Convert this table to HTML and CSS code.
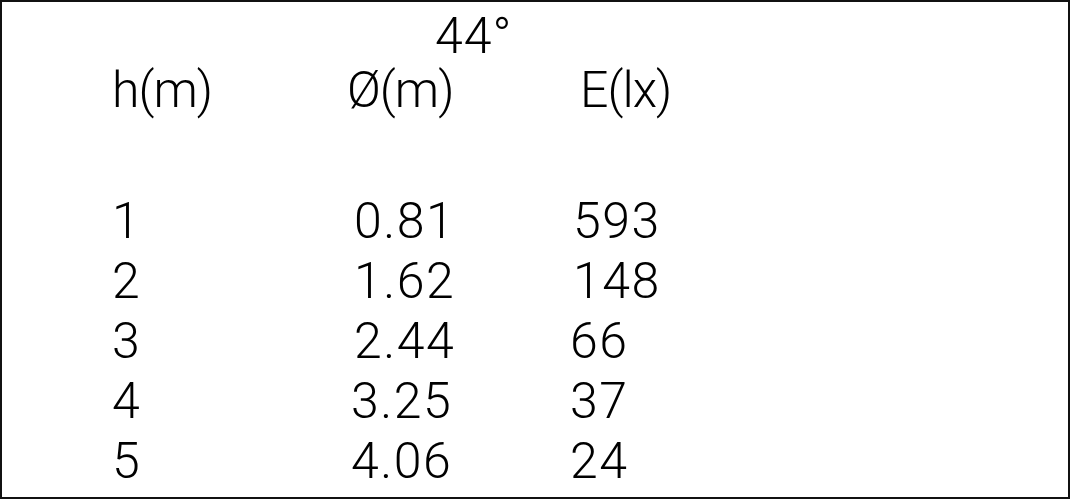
FILE: index.html
```
<!DOCTYPE html>
<html lang="en">
<head>
  <meta charset="UTF-8">
  <title>Beam table 44°</title>
  <link rel="stylesheet" href="styles.css">
</head>
<body>
  <div class="beam-card">
    <div class="beam-angle">44°</div>
    <div class="beam-row beam-head">
      <span>h(m)</span>
      <span>Ø(m)</span>
      <span>E(lx)</span>
    </div>
    <div class="beam-body">
      <div class="beam-row"><span>1</span><span>0.81</span><span>593</span></div>
      <div class="beam-row"><span>2</span><span>1.62</span><span>148</span></div>
      <div class="beam-row"><span>3</span><span>2.44</span><span class="nudge">66</span></div>
      <div class="beam-row"><span>4</span><span class="nudge">3.25</span><span class="nudge">37</span></div>
      <div class="beam-row"><span>5</span><span class="nudge">4.06</span><span class="nudge">24</span></div>
    </div>
  </div>
</body>
</html>
```

FILE: styles.css
```
* { box-sizing: border-box; }

body {
  margin: 0;
  background: #fff;
  font-family: Roboto, 'Liberation Sans', sans-serif;
  font-weight: 300;
  color: #000;
}

.beam-card {
  width: 1070px;
  height: 499px;
  border: 2px solid #111;
  padding: 7px 0 0 110px;
  font-size: 50px;
  overflow: hidden;
}

.beam-angle {
  line-height: 54px;
  padding-left: 323px;
  letter-spacing: 1px;
}

.beam-row {
  display: grid;
  grid-template-columns: 242px 219px auto;
  line-height: 60px;
  white-space: nowrap;
  letter-spacing: 1.5px;
}

.beam-head {
  grid-template-columns: 235px 233px auto;
  line-height: 54px;
  letter-spacing: -1px;
}

.beam-body { margin-top: 74px; }

.nudge { margin-left: -3px; }
```
